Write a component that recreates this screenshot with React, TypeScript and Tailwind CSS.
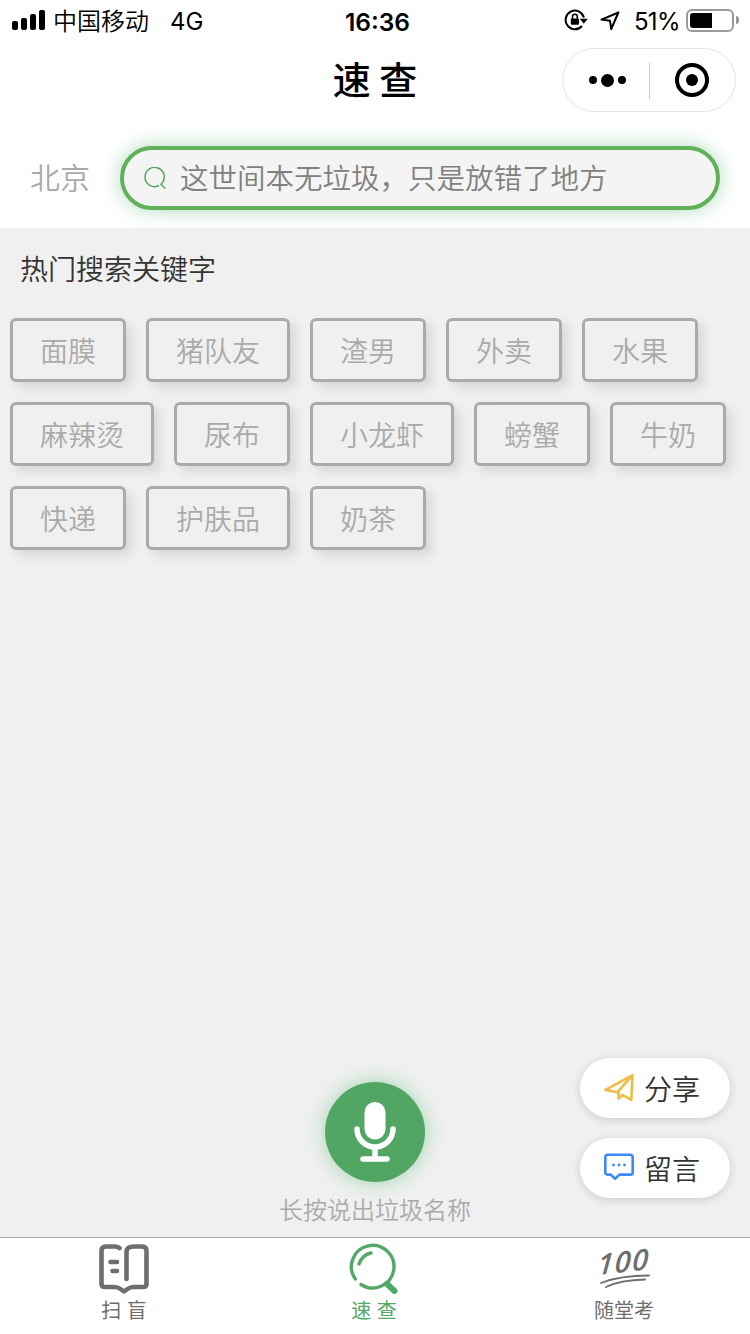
import type { ReactNode } from "react";

const keywords = [
    "面膜", "猪队友", "渣男", "外卖", "水果",
    "麻辣烫", "尿布", "小龙虾", "螃蟹", "牛奶",
    "快递", "护肤品", "奶茶",
];

function StatusBar() {
    return (
        <div className="grid h-10 grid-cols-3 items-center font-['Inter','Noto_Sans_CJK_SC',sans-serif] text-2xl leading-9">
            <div className="flex items-center pl-3">
                <div className="flex h-5 w-[33px] items-end gap-[3px]">
                    <span className="h-[9px] w-1.5 rounded-[2px] bg-black"/>
                    <span className="h-3 w-1.5 rounded-[2px] bg-black"/>
                    <span className="h-4 w-1.5 rounded-[2px] bg-black"/>
                    <span className="h-5 w-1.5 rounded-[2px] bg-black"/>
                </div>
                <span className="ml-2 pt-[3px] font-[350]">中国移动</span>
                <span className="ml-[21px] pt-[3px]">4G</span>
            </div>
            <div className="pl-[5px] pt-[3px] text-center text-[24.5px] font-semibold">16:36</div>
            <div className="flex items-center justify-end pr-[11px]">
                <svg className="mr-3 h-6 w-6" viewBox="0 0 24 24" fill="none" stroke="#000" strokeWidth="2">
                    <path d="M19.9 9.5A9.3 9.3 0 1 0 18 18"/>
                    <path d="M15.8 10.8h8l-4 5z" fill="#000" stroke="none"/>
                    <rect x="6.8" y="10.5" width="8.2" height="6.3" rx="1" fill="#000" stroke="none"/>
                    <path d="M8.5 11V8.7a2.4 2.4 0 0 1 4.800 0V11" strokeWidth="1.5"/>
                </svg>
                <svg className="mr-3.5 h-5 w-5" viewBox="0 0 20 20" fill="none" stroke="#000" strokeWidth="2" strokeLinejoin="round">
                    <path d="M18.4 2.5 1.5 9.6l8.5 1.2 1.2 8.2z"/>
                </svg>
                <span className="pt-[3px] tracking-[-0.6px]">51%</span>
                <div className="ml-1.5 h-[23px] w-12 rounded-md border-2 border-[#999] p-0.5">
                    <div className="h-full w-[22px] rounded-l-[3px] bg-black"/>
                </div>
                <div className="ml-0.5 h-2 w-[3px] rounded-r-full bg-[#999]"/>
            </div>
        </div>
    );
}

function NavBar() {
    return (
        <div className="relative flex h-[88px] justify-center">
            <h1 className="mt-1.5 text-[38px] font-medium leading-[64px] text-black">速 查</h1>
            <div className="absolute right-3.5 top-2 flex h-16 w-[174px] items-center rounded-full border border-[#e6e6e6]">
                <div className="flex flex-1 items-center justify-center gap-1 pl-0.5">
                    <span className="h-2 w-2 rounded-full bg-black"/>
                    <span className="h-[13px] w-[13px] rounded-full bg-black"/>
                    <span className="h-2 w-2 rounded-full bg-black"/>
                </div>
                <span className="h-[37px] w-px bg-[#ccc]"/>
                <div className="flex w-[85px] justify-center pr-px">
                    <span className="flex h-[34px] w-[34px] items-center justify-center rounded-full border-4 border-black">
                        <span className="h-3 w-3 rounded-full bg-black"/>
                    </span>
                </div>
            </div>
        </div>
    );
}

function SearchBar() {
    return (
        <div className="flex h-[100px] items-center overflow-hidden pl-[30px] pr-[30px]">
            <span className="w-[90px] pb-1 text-[30px] font-[350] text-[#aaa]">北京</span>
            <div className="flex h-16 flex-1 items-center rounded-full border-4 border-[#5fb258] bg-[#f4f4f4] pl-5 shadow-[0_0_20px_rgba(80,170,110,0.45)]">
                <svg className="h-[22px] w-[22px]" viewBox="0 0 22 22" fill="none" stroke="#52a866" strokeWidth="1.5" strokeLinecap="round">
                    <path d="M14.500 18.800A9.600 9.600 0 1 1 17 17.200L21 21.200"/>
                </svg>
                <span className="ml-3.5 whitespace-nowrap pb-0.5 text-[28.5px] font-[350] text-[#808080]">这世间本无垃圾，只是放错了地方</span>
            </div>
        </div>
    );
}

function FloatButton({icon, label}: { icon: ReactNode; label: string }) {
    return (
        <button className="flex h-[60px] w-[150px] items-center gap-2.5 rounded-full bg-white pl-6 text-[28px] font-[350] text-[#333] shadow-[0_2px_10px_rgba(0,0,0,0.15)]">
            {icon}
            <span>{label}</span>
        </button>
    );
}

function Tab({icon, label, active}: { icon: ReactNode; label: string; active?: boolean }) {
    return (
        <div className={`flex w-[250px] flex-col items-center pr-0.5 pt-1 ${active ? "text-[#52a866]" : "text-[#6e6e6e]"}`}>
            {icon}
            <span className="text-xl leading-7 [word-spacing:1px]">{label}</span>
        </div>
    );
}

export default function App() {
    return (
        <div className="relative flex h-[1334px] w-[750px] flex-col overflow-hidden bg-[#f0f0f0] font-['Noto_Sans_CJK_SC',sans-serif]">
            <header className="bg-white">
                <StatusBar/>
                <NavBar/>
                <SearchBar/>
            </header>

            <main className="flex flex-1 flex-col">
                <h2 className="pl-5 pt-5 text-[28px] font-[350] leading-10 text-[#333]">热门搜索关键字</h2>
                <div className="mt-[30px] flex flex-wrap gap-5 pl-2.5 pr-2">
                    {keywords.map((word) => (
                        <span key={word} className="flex h-16 items-center rounded-md border-3 border-[#aaa] px-[27px] text-[28px] font-[350] text-[#aaa] shadow-[6px_6px_10px_rgba(100,115,130,0.18)]">
                            {word}
                        </span>
                    ))}
                </div>

                <div className="mt-auto flex flex-col items-center pb-[11px]">
                    <button className="flex h-[100px] w-[100px] items-center justify-center rounded-full bg-[#52a664] shadow-[0_0_20px_rgba(60,180,100,0.45)]">
                        <svg className="h-[60px] w-[42px]" viewBox="0 0 42 60" fill="none" stroke="#fff" strokeWidth="5.5" strokeLinecap="round">
                            <rect x="10.5" y="0" width="21" height="37.5" rx="10.5" fill="#fff" stroke="none"/>
                            <path d="M3 27a18 18 0 0 0 36 0M21 45v11M9 57h24"/>
                        </svg>
                    </button>
                    <p className="mt-[9px] text-2xl font-[350] leading-[35px] text-[#aaa]">长按说出垃圾名称</p>
                </div>
            </main>

            <div className="absolute bottom-[136px] right-5 flex flex-col gap-5">
                <FloatButton
                    label="分享"
                    icon={
                        <svg className="h-[30px] w-[30px]" viewBox="0 0 30 30" fill="none" stroke="#efbd46" strokeWidth="2.6" strokeLinejoin="round" strokeLinecap="round">
                            <path d="M28.500 2.200 1.500 17l12 2.200L28.500 2.200 27.300 26.800 18.200 21.800M14.600 19.500v6l4-3.500"/>
                        </svg>
                    }
                />
                <FloatButton
                    label="留言"
                    icon={
                        <svg className="mb-0.5 h-[30px] w-[30px]" viewBox="0 0 30 30" fill="none" stroke="#3e88f7" strokeWidth="2.6" strokeLinejoin="round">
                            <path d="M4 2.700h22a2.700 2.700 0 0 1 2.700 2.700v15A2.200 2.200 0 0 1 26.500 22.600H15.500L11 26.700 6.800 22.600H3.500a2.200 2.200 0 0 1-2.200-2.200v-15A2.700 2.700 0 0 1 4 2.700z"/>
                            <path d="M9.500 13h.01M15 13h.01M20.500 13h.01" strokeWidth="2.800" strokeLinecap="round"/>
                        </svg>
                    }
                />
            </div>

            <nav className="flex h-[97px] border-t border-[#aaa] bg-white">
                <Tab
                    label="扫 盲"
                    icon={
                        <svg className="h-[54px] w-[54px]" viewBox="0 0 54 54" fill="none" stroke="currentColor" strokeWidth="4.6" strokeLinecap="round" strokeLinejoin="round">
                            <path d="M22.500 6Q20.500 4.500 18 4.500H9Q4.500 4.500 4.500 9v33Q4.500 45 8 45h9q4 0 6.500 2l3.500 2.500 3.500-2.500q2.500-2 6.500-2h9q3.500 0 3.500-3V9q0-4.500-4.500-4.500H37Q29.500 4.500 29.500 10v27"/>
                            <path d="M13.500 20h6.500M15.500 29h4.500"/>
                        </svg>
                    }
                />
                <Tab
                    active
                    label="速 查"
                    icon={
                        <svg className="h-[54px] w-[54px]" viewBox="0 0 54 54" fill="none" stroke="currentColor" strokeWidth="3.4" strokeLinecap="round">
                            <path d="M8.300 37A21.300 21.300 0 1 1 14 42.500"/>
                            <path d="M12 22Q15 13 24 11"/>
                            <path d="m40 42 7.500 7" strokeWidth="6"/>
                        </svg>
                    }
                />
                <Tab
                    label="随堂考"
                    icon={
                        <svg className="h-[54px] w-[60px] overflow-visible" viewBox="0 0 60 54" fill="none" stroke="currentColor" strokeWidth="1.8" strokeLinecap="round">
                            <text transform="translate(3 33) rotate(-6) skewX(-10)" fill="currentColor" stroke="none" fontFamily="Open Sans, sans-serif" fontSize="29" fontStyle="italic" fontWeight="600" letterSpacing="1.5">100</text>
                            <path d="M7 41Q26 33.500 55 33.500M12 45Q26 38 51 37.500"/>
                        </svg>
                    }
                />
            </nav>
        </div>
    );
}
